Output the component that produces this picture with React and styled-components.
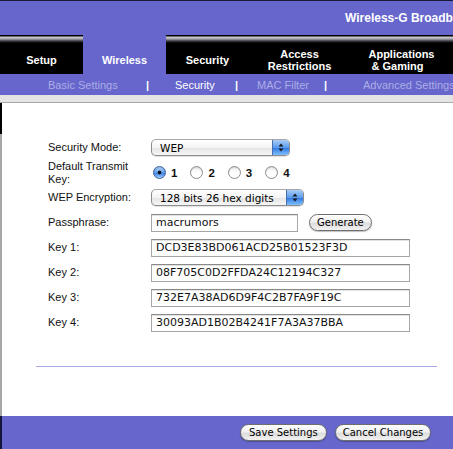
import React from "react"
import styled, { createGlobalStyle } from "styled-components"

const GlobalStyle = createGlobalStyle`
  html, body {
    margin: 0;
    padding: 0;
    background: #ffffff;
    overflow: hidden;
  }
`

const purple = "#6666cc"

const Page = styled.div`
  width: 453px;
  height: 449px;
  overflow: hidden;
  font-family: "Liberation Sans", Arial, sans-serif;
  display: flex;
  flex-direction: column;
`

const Header = styled.div`
  height: 34px;
  flex: none;
  background: ${purple};
  border-top: 1px solid #1a1a3a;
  display: flex;
  align-items: center;
  padding-left: 345px;
  white-space: nowrap;
  color: #ffffff;
  font-weight: 700;
  font-size: 12px;
`

const TabBar = styled.div`
  height: 39px;
  flex: none;
  display: grid;
  grid-template-columns: 83px 83px 83px 101px 1fr;
`

const Tab = styled.div`
  display: flex;
  align-items: center;
  justify-content: center;
  padding-top: 11px;
  box-sizing: border-box;
  font-size: 11px;
  font-weight: 700;
  line-height: 12px;
  text-align: ${p => (p.$left ? "left" : "center")};
  color: #ffffff;
  background: ${p =>
    p.$active
      ? purple
      : "linear-gradient(to bottom, #000 0, #000 1px, #d2d2d2 2px, #a0a0a8 4px, #3c3c48 6px, #000 8px, #000 100%)"};
`

const SubNav = styled.div`
  height: 21px;
  flex: none;
  background: ${purple};
  display: grid;
  grid-template-columns: 98px 29px 60px 22px 67px 39px 1fr;
  align-items: center;
  padding-left: 48px;
  font-size: 11px;
  white-space: nowrap;
`

const SubItem = styled.span`
  color: ${p => (p.$active ? "#ffffff" : "#adade6")};
`

const Sep = styled.span`
  color: #ffffff;
  font-weight: 700;
`

const Band = styled.div`
  height: 7px;
  flex: none;
  background: #e4e4e4;
  border-bottom: 1px solid #a8a8a8;
`

const Content = styled.div`
  height: 313px;
  flex: none;
  box-sizing: border-box;
  border-left: 2px solid;
  border-image: linear-gradient(to bottom, #000 0, #000 32px, #a6a6a6 32px) 1;
  padding: 32px 0 0 46px;
`

const Form = styled.div`
  display: grid;
  grid-template-columns: 103px 1fr;
  grid-auto-rows: 25px;
  align-items: center;
`

const Label = styled.div`
  font-size: 11px;
  line-height: 13px;
  color: #111111;
`

const Field = styled.div`
  display: flex;
  align-items: center;
`

const Popup = styled.div`
  width: ${p => p.$w}px;
  height: 17px;
  box-sizing: border-box;
  border: 1px solid #8c8c8c;
  border-top-color: #a8a8a8;
  border-radius: 5px;
  background: linear-gradient(to bottom, #ffffff 0%, #f4f4f4 50%, #e4e4e4 51%, #f6f6f6 100%);
  display: flex;
  align-items: center;
  justify-content: space-between;
  overflow: hidden;
  font-family: "DejaVu Sans", sans-serif;
  font-size: 10.5px;
  color: #000000;
  padding-left: 8px;
  box-shadow: 0 1px 1px rgba(0, 0, 0, 0.12);
`

const Stepper = styled.span`
  width: 16px;
  height: 100%;
  flex: none;
  background: linear-gradient(to bottom, #a9cdf7 0%, #5b9cec 50%, #2d74e0 51%, #7fc0fb 100%);
  border-left: 1px solid #4a6fb0;
  display: flex;
  align-items: center;
  justify-content: center;
`

const Radios = styled.div`
  display: flex;
  align-items: center;
  margin-left: 2px;
`

const RadioOpt = styled.label`
  display: flex;
  align-items: center;
  gap: 5px;
  margin-right: 13px;
  font-size: 11.5px;
  font-weight: 700;
  color: #111111;
`

const Circle = styled.span`
  width: 13px;
  height: 13px;
  box-sizing: border-box;
  border-radius: 50%;
  border: 1px solid ${p => (p.$on ? "#3b5f9c" : "#8d8d8d")};
  background: ${p =>
    p.$on
      ? "radial-gradient(circle at 50% 50%, #111 0, #111 1.6px, transparent 2.2px), linear-gradient(to bottom, #b9d8fa 0%, #5c9ded 50%, #3a7de4 55%, #9fd0fd 100%)"
      : "linear-gradient(to bottom, #f2f2f2 0%, #ffffff 60%, #ffffff 100%)"};
  box-shadow: inset 0 1px 1px rgba(0, 0, 0, 0.15);
`

const TextBox = styled.div`
  width: ${p => p.$w}px;
  height: 18px;
  box-sizing: border-box;
  border: 1px solid #a6a6a6;
  border-top-color: #8a8a8a;
  box-shadow: inset 0 1px 0 #e2e2e2;
  background: #ffffff;
  display: flex;
  align-items: center;
  padding-left: 4px;
  font-family: "DejaVu Sans", sans-serif;
  font-size: 11px;
  color: #111111;
  white-space: nowrap;
`

const PillButton = styled.button`
  height: 17px;
  box-sizing: border-box;
  margin-left: ${p => p.$ml || 0}px;
  padding: 0 ${p => p.$px || 8}px;
  border: 1px solid #6e6e6e;
  border-radius: 9px;
  background: linear-gradient(to bottom, #ffffff 0%, #f1f1f1 45%, #dcdcdc 55%, #f2f2f2 100%);
  font-family: "DejaVu Sans", sans-serif;
  font-size: 10px;
  color: #000000;
  line-height: 15px;
  box-shadow: 0 1px 1px rgba(0, 0, 0, 0.25);
  white-space: nowrap;
`

const Rule = styled.div`
  margin: 31px 16px 0 -12px;
  height: 1px;
  background: #a9a9e9;
`

const Footer = styled.div`
  flex: 1;
  background: ${purple};
  border-left: 2px solid #15153a;
  display: flex;
  align-items: flex-start;
  padding: 8px 0 0 238px;
  gap: 8px;
`

function ArrowsIcon() {
  return (
    <svg width="6" height="9" viewBox="0 0 6 9">
      <path d="M3 0.5 L5.5 3.5 L0.5 3.5 Z" fill="#1a1a1a" />
      <path d="M3 8.5 L5.5 5.5 L0.5 5.5 Z" fill="#1a1a1a" />
    </svg>
  )
}

function Select({ width, value }) {
  return (
    <Popup $w={width}>
      <span>{value}</span>
      <Stepper>
        <ArrowsIcon />
      </Stepper>
    </Popup>
  )
}

const keys = [
  "DCD3E83BD061ACD25B01523F3D",
  "08F705C0D2FFDA24C12194C327",
  "732E7A38AD6D9F4C2B7FA9F19C",
  "30093AD1B02B4241F7A3A37BBA",
]

function App() {
  return (
    <>
      <GlobalStyle />
      <Page>
        <Header>Wireless-G Broadband Router</Header>
        <TabBar>
          <Tab>Setup</Tab>
          <Tab $active>Wireless</Tab>
          <Tab>Security</Tab>
          <Tab>
            Access
            <br />
            Restrictions
          </Tab>
          <Tab $left>
            Applications
            <br />
            {"\u00a0& Gaming"}
          </Tab>
        </TabBar>
        <SubNav>
          <SubItem>Basic Settings</SubItem>
          <Sep>|</Sep>
          <SubItem $active>Security</SubItem>
          <Sep>|</Sep>
          <SubItem>MAC Filter</SubItem>
          <Sep>|</Sep>
          <SubItem>Advanced Settings</SubItem>
        </SubNav>
        <Band />
        <Content>
          <Form>
            <Label>Security Mode:</Label>
            <Field>
              <Select width={139} value="WEP" />
            </Field>

            <Label>
              Default Transmit
              <br />
              Key:
            </Label>
            <Radios>
              {[1, 2, 3, 4].map(n => (
                <RadioOpt key={n}>
                  <Circle $on={n === 1} />
                  {n}
                </RadioOpt>
              ))}
            </Radios>

            <Label>WEP Encryption:</Label>
            <Field>
              <Select width={153} value="128 bits 26 hex digits" />
            </Field>

            <Label>Passphrase:</Label>
            <Field>
              <TextBox $w={147}>macrumors</TextBox>
              <PillButton $ml={11} $px={7}>Generate</PillButton>
            </Field>

            {keys.map((k, i) => (
              <React.Fragment key={k}>
                <Label>Key {i + 1}:</Label>
                <Field>
                  <TextBox $w={259}>{k}</TextBox>
                </Field>
              </React.Fragment>
            ))}
          </Form>
          <Rule />
        </Content>
        <Footer>
          <PillButton $px={8}>Save Settings</PillButton>
          <PillButton $px={7}>Cancel Changes</PillButton>
        </Footer>
      </Page>
    </>
  )
}

export default App
